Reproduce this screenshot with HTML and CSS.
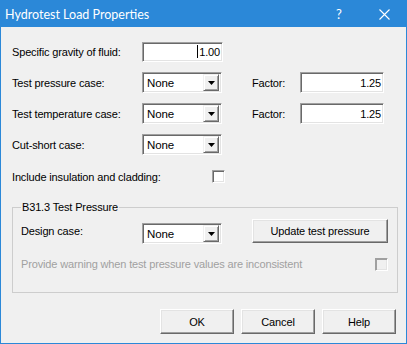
FILE: index.html
```html
<!DOCTYPE html>
<html lang="en">
<head>
  <meta charset="UTF-8" />
  <title>Hydrotest Load Properties</title>
  <link rel="stylesheet" href="styles.css">
</head>
<body>
  <div class="window">
    <div class="titlebar">
      <span class="title">Hydrotest Load Properties</span>
      <span class="help-btn">?</span>
      <span class="close-btn">
        <svg width="11" height="11" viewBox="0 0 11 11"><path d="M0.5 0.5L10.5 10.5M10.5 0.5L0.5 10.5" stroke="#fff" stroke-width="1.1" fill="none"/></svg>
      </span>
    </div>

    <div class="content">
      <div class="row">
        <span class="label">Specific gravity of fluid:</span>
        <div class="field gravity"><span class="caret"></span>1.00</div>
      </div>

      <div class="row">
        <span class="label">Test pressure case:</span>
        <div class="combo">
          <span class="combo-text">None</span>
          <span class="combo-btn"><svg width="7" height="4" viewBox="0 0 7 4"><path d="M0 0H7L3.5 4Z" fill="#000"/></svg></span>
        </div>
        <span class="factor-label">Factor:</span>
        <div class="field factor">1.25</div>
      </div>

      <div class="row">
        <span class="label">Test temperature case:</span>
        <div class="combo">
          <span class="combo-text">None</span>
          <span class="combo-btn"><svg width="7" height="4" viewBox="0 0 7 4"><path d="M0 0H7L3.5 4Z" fill="#000"/></svg></span>
        </div>
        <span class="factor-label">Factor:</span>
        <div class="field factor">1.25</div>
      </div>

      <div class="row">
        <span class="label">Cut-short case:</span>
        <div class="combo">
          <span class="combo-text">None</span>
          <span class="combo-btn"><svg width="7" height="4" viewBox="0 0 7 4"><path d="M0 0H7L3.5 4Z" fill="#000"/></svg></span>
        </div>
      </div>

      <div class="row check-row">
        <span class="label long">Include insulation and cladding:</span>
        <span class="checkbox"></span>
      </div>

      <fieldset class="group">
        <legend>B31.3 Test Pressure</legend>
        <div class="design-row">
          <span class="group-label">Design case:</span>
          <div class="combo">
            <span class="combo-text">None</span>
            <span class="combo-btn"><svg width="7" height="4" viewBox="0 0 7 4"><path d="M0 0H7L3.5 4Z" fill="#000"/></svg></span>
          </div>
          <button class="btn update-btn">Update test pressure</button>
        </div>
        <div class="warn-row">
          <span class="disabled">Provide warning when test pressure values are inconsistent</span>
          <span class="checkbox off"></span>
        </div>
      </fieldset>

      <div class="actions">
        <button class="btn">OK</button>
        <button class="btn">Cancel</button>
        <button class="btn">Help</button>
      </div>
    </div>
  </div>
</body>
</html>
```

FILE: styles.css
```css
body {
  margin: 0;
  font-family: "Liberation Sans", Arial, sans-serif;
  font-size: 11px;
  letter-spacing: -0.15px;
  color: #000;
  background: #f0f0f0;
}

.window {
  width: 407px;
  height: 344px;
  box-sizing: border-box;
  border: 1px solid #2b88d8;
  background: #f0f0f0;
}

.titlebar {
  height: 26px;
  background: #2b88d8;
  color: #fff;
  display: flex;
  align-items: center;
  letter-spacing: 0;
}

.title {
  flex: 1;
  padding-left: 4px;
  font-family: Lato, "Noto Sans", sans-serif;
  font-size: 12.5px;
}

.help-btn {
  width: 46px;
  text-align: center;
  font-family: Lato, "Noto Sans", sans-serif;
  font-size: 13px;
}

.close-btn {
  width: 44px;
  display: flex;
  justify-content: center;
  align-items: center;
}

.content {
  padding: 9px 10px 0 11px;
}

.row {
  height: 31px;
  display: flex;
  align-items: center;
}

.label {
  width: 130px;
}

.label.long {
  width: 200px;
}

.check-row {
  height: 33px;
}

/* sunken edit boxes */
.field,
.combo {
  box-sizing: border-box;
  height: 20px;
  background: #fff;
  border: 1px solid;
  border-color: #a0a0a0 #fff #fff #a0a0a0;
  box-shadow: inset 1px 1px #696969, inset -1px -1px #e3e3e3;
}

.field {
  display: flex;
  align-items: center;
  justify-content: flex-end;
  padding-right: 2px;
}

.gravity {
  width: 81px;
}

.factor {
  width: 84px;
  height: 21px;
}

.caret {
  width: 1px;
  height: 13px;
  background: #000;
  margin-right: 1px;
}

.combo {
  width: 80px;
  height: 21px;
  display: flex;
  align-items: center;
  padding: 2px;
}

.combo-text {
  flex: 1;
  padding-left: 2px;
  font-size: 11.5px;
}

.combo-btn {
  box-sizing: border-box;
  width: 16px;
  height: 17px;
  display: flex;
  align-items: center;
  justify-content: center;
  background: #f0f0f0;
  border: 1px solid;
  border-color: #f0f0f0 #696969 #696969 #f0f0f0;
  box-shadow: inset 1px 1px #fff, inset -1px -1px #a0a0a0;
}

.factor-label {
  width: 48px;
  margin-left: 30px;
}

.checkbox {
  box-sizing: border-box;
  width: 13px;
  height: 13px;
  background: #fff;
  border: 1px solid;
  border-color: #a0a0a0 #fff #fff #a0a0a0;
  box-shadow: inset 1px 1px #696969, inset -1px -1px #e3e3e3;
}

.checkbox.off {
  background: #f0f0f0;
  box-shadow: inset 1px 1px #a0a0a0, inset -1px -1px #e3e3e3;
}

.group {
  width: 383px;
  box-sizing: border-box;
  margin: 7px 0 0 0;
  padding: 5px 9px 16px 8px;
  border: 1px solid #cdcdcd;
}

.group legend {
  padding: 0 1px;
  font-size: 11px;
  line-height: 14px;
}

.design-row {
  height: 24px;
  display: flex;
  align-items: flex-start;
}

.group-label {
  width: 121px;
  margin-top: 6px;
}

.design-row .combo {
  margin-top: 4px;
}

.btn {
  box-sizing: border-box;
  font-family: "Liberation Sans", Arial, sans-serif;
  font-size: 11px;
  letter-spacing: -0.15px;
  color: #000;
  background: #f0f0f0;
  border: 1px solid;
  border-color: #fff #696969 #696969 #fff;
  box-shadow: inset -1px -1px #a0a0a0, inset 1px 1px #e3e3e3;
  padding: 0;
}

.update-btn {
  width: 136px;
  height: 24px;
  margin-left: 30px;
}

.warn-row {
  height: 24px;
  margin-top: 9px;
  display: flex;
  align-items: center;
  justify-content: space-between;
}

.disabled {
  color: #a0a0a0;
}

.actions {
  margin-top: 16px;
  display: flex;
  justify-content: flex-end;
  gap: 7px;
}

.actions .btn {
  width: 74px;
  height: 25px;
}
```
